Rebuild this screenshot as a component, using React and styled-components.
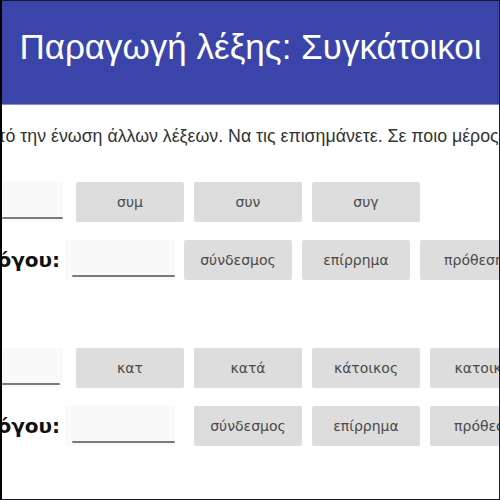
import React from "react";
import styled, { createGlobalStyle } from "styled-components";

const Global = createGlobalStyle`
  html, body { margin: 0; padding: 0; background: #fff; }
  body { width: 500px; height: 500px; overflow: hidden; }
  * { box-sizing: border-box; }
`;

const Frame = styled.div`
  width: 500px;
  height: 500px;
  overflow: hidden;
  border: 1px solid #1a1a2a;
  border-left: 2px solid #000;
  display: flex;
  flex-direction: column;
  background: #fff;
`;

const Header = styled.header`
  height: 104px;
  flex: none;
  background: #3b44a9;
  border-bottom: 1px solid #858ce0;
  display: flex;
  align-items: center;
  justify-content: center;
  padding-bottom: 12px;
`;

const Title = styled.h1`
  margin: 0;
  font-family: "Liberation Sans", Arial, sans-serif;
  font-weight: 400;
  font-size: 35px;
  color: #fff;
  white-space: nowrap;
`;

const Content = styled.main`
  display: flex;
  flex-direction: column;
  padding-top: 20px;
`;

const Instruction = styled.p`
  margin: 0 0 35px 0;
  font-family: "Liberation Sans", Arial, sans-serif;
  font-size: 17.75px;
  line-height: 22px;
  color: #333;
  white-space: nowrap;
  overflow: hidden;
  text-indent: -19px;
`;

const Section = styled.section`
  display: flex;
  flex-direction: column;
  gap: 18px;
  margin-bottom: ${(p) => p.$after || 0}px;
`;

const Row = styled.div`
  display: flex;
  align-items: center;
  white-space: nowrap;
`;

const Label = styled.div`
  width: 63px;
  flex: none;
  display: flex;
  justify-content: flex-end;
  overflow: hidden;
  font-family: "DejaVu Sans", Verdana, sans-serif;
  font-weight: 700;
  font-size: 20px;
  color: #111;
  padding-right: 5px;
`;

const InputBox = styled.div`
  flex: none;
  width: ${(p) => p.$w}px;
  height: 40px;
  margin-right: ${(p) => p.$mr}px;
  background: #f9f9f9;
  display: flex;
  align-items: flex-end;
  padding: 0 ${(p) => p.$pr || 0}px 3px ${(p) => p.$pl || 0}px;
`;

const Line = styled.div`
  flex: 1;
  height: 2px;
  background: #7a7a7a;
  border-radius: 1px;
`;

const Buttons = styled.div`
  display: flex;
  gap: 10px;
  flex: none;
`;

const Choice = styled.button`
  flex: none;
  width: 108px;
  height: 40px;
  border: none;
  border-radius: 2px;
  background: #dddddd;
  color: #4a4a4a;
  font-family: "DejaVu Sans", Verdana, sans-serif;
  font-size: 14px;
  padding: 0;
  cursor: pointer;
`;

const ChoiceList = ({ items }) => (
  <Buttons>
    {items.map((t) => (
      <Choice key={t}>{t}</Choice>
    ))}
  </Buttons>
);

const pos = ["σύνδεσμος", "επίρρημα", "πρόθεση"];

export default function App() {
  return (
    <>
      <Global />
      <Frame>
        <Header>
          <Title>Παραγωγή λέξης: Συγκάτοικοι</Title>
        </Header>
        <Content>
          <Instruction>
            από την ένωση άλλων λέξεων. Να τις επισημάνετε. Σε ποιο μέρος του λόγου ανήκουν;
          </Instruction>
          <Section $after={68}>
            <Row>
              <InputBox $w={61} $mr={13}>
                <Line />
              </InputBox>
              <ChoiceList items={["συμ", "συν", "συγ"]} />
            </Row>
            <Row>
              <Label>
                <span>λόγου:</span>
              </Label>
              <InputBox $w={110} $mr={9} $pl={7}>
                <Line />
              </InputBox>
              <ChoiceList items={pos} />
            </Row>
          </Section>
          <Section>
            <Row>
              <InputBox $w={61} $mr={13} $pr={3}>
                <Line />
              </InputBox>
              <ChoiceList items={["κατ", "κατά", "κάτοικος", "κατοικώ"]} />
            </Row>
            <Row>
              <Label>
                <span>λόγου:</span>
              </Label>
              <InputBox $w={110} $mr={19} $pl={7}>
                <Line />
              </InputBox>
              <ChoiceList items={pos} />
            </Row>
          </Section>
        </Content>
      </Frame>
    </>
  );
}
